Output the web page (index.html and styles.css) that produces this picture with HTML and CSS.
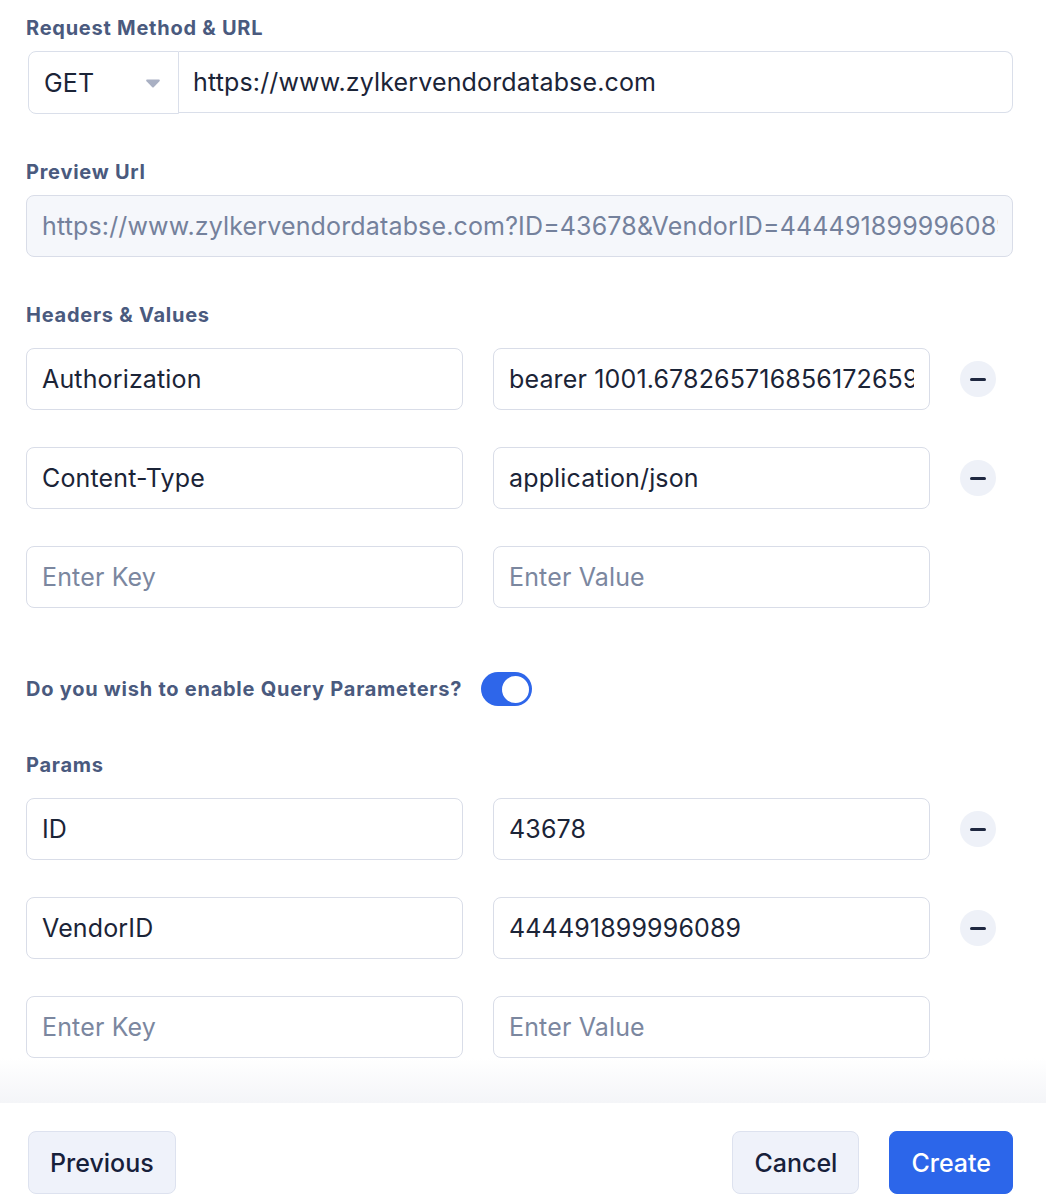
FILE: index.html
```html
<!DOCTYPE html>
<html lang="en">
<head>
  <meta charset="UTF-8">
  <title>Webhook Request</title>
  <link rel="stylesheet" href="styles.css">
</head>
<body>
  <section class="panel">
    <div class="content">
      <div class="field">
        <label class="label">Request Method &amp; URL</label>
        <div class="method-url">
          <div class="method">
            <span>GET</span>
            <svg class="caret" width="14" height="9" viewBox="0 0 14 9"><path d="M1.2 0.5h11.6c0.9 0 1.3 1 0.7 1.7L7.7 8.2c-0.4 0.4-1 0.4-1.4 0L0.5 2.2C-0.1 1.5 0.3 0.5 1.2 0.5z" fill="#a9b0c3"/></svg>
          </div>
          <input class="url" type="text" value="https://www.zylkervendordatabse.com">
        </div>
      </div>

      <div class="field">
        <label class="label">Preview Url</label>
        <input class="input preview" type="text" readonly value="https://www.zylkervendordatabse.com?ID=43678&amp;VendorID=444491899996089">
      </div>

      <div class="field">
        <label class="label label-rows">Headers &amp; Values</label>
        <div class="rows">
          <div class="row">
            <input class="input" type="text" value="Authorization">
            <input class="input" type="text" value="bearer 1001.67826571685617265966">
            <button type="button" class="remove"><span></span></button>
          </div>
          <div class="row">
            <input class="input" type="text" value="Content-Type">
            <input class="input" type="text" value="application/json">
            <button type="button" class="remove"><span></span></button>
          </div>
          <div class="row">
            <input class="input" type="text" placeholder="Enter Key">
            <input class="input" type="text" placeholder="Enter Value">
          </div>
        </div>
      </div>

      <div class="toggle-row">
        <span class="label">Do you wish to enable Query Parameters?</span>
        <span class="toggle"><span class="knob"></span></span>
      </div>

      <div class="field field-last">
        <label class="label label-rows">Params</label>
        <div class="rows">
          <div class="row">
            <input class="input" type="text" value="ID">
            <input class="input" type="text" value="43678">
            <button type="button" class="remove"><span></span></button>
          </div>
          <div class="row">
            <input class="input" type="text" value="VendorID">
            <input class="input" type="text" value="444491899996089">
            <button type="button" class="remove"><span></span></button>
          </div>
          <div class="row">
            <input class="input" type="text" placeholder="Enter Key">
            <input class="input" type="text" placeholder="Enter Value">
          </div>
        </div>
      </div>
      <div class="fade"></div>
    </div>

    <footer class="footer">
      <button type="button" class="btn">Previous</button>
      <div class="actions">
        <button type="button" class="btn">Cancel</button>
        <button type="button" class="btn btn-primary">Create</button>
      </div>
    </footer>
  </section>
</body>
</html>
```

FILE: styles.css
```css
* {
  box-sizing: border-box;
}

body {
  margin: 0;
  background-color: #ffffff;
  font-family: Inter, "Noto Sans", sans-serif;
  color: #1b2437;
}

.panel {
  width: 1046px;
  height: 1204px;
  display: flex;
  flex-direction: column;
}

.content {
  padding: 16px 33px 0 26px;
}

.label {
  display: block;
  font-size: 20px;
  line-height: 24px;
  font-weight: 700;
  letter-spacing: 0.75px;
  color: #4a5a7e;
  margin-bottom: 11px;
}

.label-rows {
  margin-bottom: 21px;
}

.field {
  margin-bottom: 46px;
}

.field-last {
  margin-bottom: 0;
}

.method-url {
  display: flex;
  height: 63px;
  margin-left: 2px;
}

.method {
  width: 151px;
  display: flex;
  align-items: center;
  justify-content: space-between;
  padding: 0 18px 0 15px;
  border: 1px solid #dadfea;
  border-radius: 8px 0 0 8px;
  font-size: 25px;
  letter-spacing: 0.15px;
}

.caret {
  margin-top: 2px;
}

.url {
  flex: 1;
  border: 1px solid #dadfea;
  border-left: none;
  border-radius: 0 8px 8px 0;
  font: inherit;
  font-size: 25px;
  letter-spacing: 0.15px;
  color: #1b2437;
  padding: 0 14px;
  height: 62px;
}

.input {
  width: 100%;
  height: 62px;
  border: 1px solid #d9dde8;
  border-radius: 8px;
  font: inherit;
  font-size: 25px;
  letter-spacing: 0.15px;
  color: #1b2437;
  padding: 0 15px;
  background-color: #ffffff;
}

input:focus {
  outline: none;
}

.input::placeholder {
  color: #7b879f;
}

.preview {
  background-color: #f5f7fb;
  color: #74819c;
  padding-right: 14px;
}

.rows {
  display: flex;
  flex-direction: column;
  gap: 37px;
}

.row {
  display: grid;
  grid-template-columns: 437px 437px 36px;
  gap: 30px;
  align-items: center;
}

.remove {
  width: 36px;
  height: 36px;
  border: none;
  border-radius: 50%;
  background-color: #eef1f8;
  display: flex;
  align-items: center;
  justify-content: center;
  padding: 0;
  cursor: pointer;
}

.remove span {
  width: 16px;
  height: 3px;
  border-radius: 2px;
  background-color: #1e2740;
}

.toggle-row {
  display: flex;
  align-items: center;
  gap: 19px;
  height: 34px;
  margin-top: 64px;
  margin-bottom: 47px;
}

.toggle-row .label {
  margin-bottom: 0;
}

.toggle {
  width: 51px;
  height: 34px;
  border-radius: 17px;
  background-color: #2e66ea;
  display: flex;
  align-items: center;
  justify-content: flex-end;
  padding: 0 3px;
}

.knob {
  width: 27px;
  height: 27px;
  border-radius: 50%;
  background-color: #ffffff;
}

.fade {
  height: 45px;
  margin: 0 -33px 0 -26px;
  background: linear-gradient(to bottom, rgba(244, 245, 248, 0) 0%, #f4f5f8 100%);
}

.footer {
  display: flex;
  justify-content: space-between;
  align-items: flex-start;
  padding: 28px 33px 0 28px;
}

.actions {
  display: flex;
  gap: 30px;
}

.btn {
  height: 63px;
  padding: 0 21px;
  border: 1px solid #dde2ef;
  border-radius: 8px;
  background-color: #eff2fa;
  font-family: Inter, "Noto Sans", sans-serif;
  font-size: 25px;
  font-weight: 500;
  color: #17203a;
  cursor: pointer;
}

.btn-primary {
  background-color: #2c66ea;
  border-color: #2c66ea;
  color: #ffffff;
}
```
